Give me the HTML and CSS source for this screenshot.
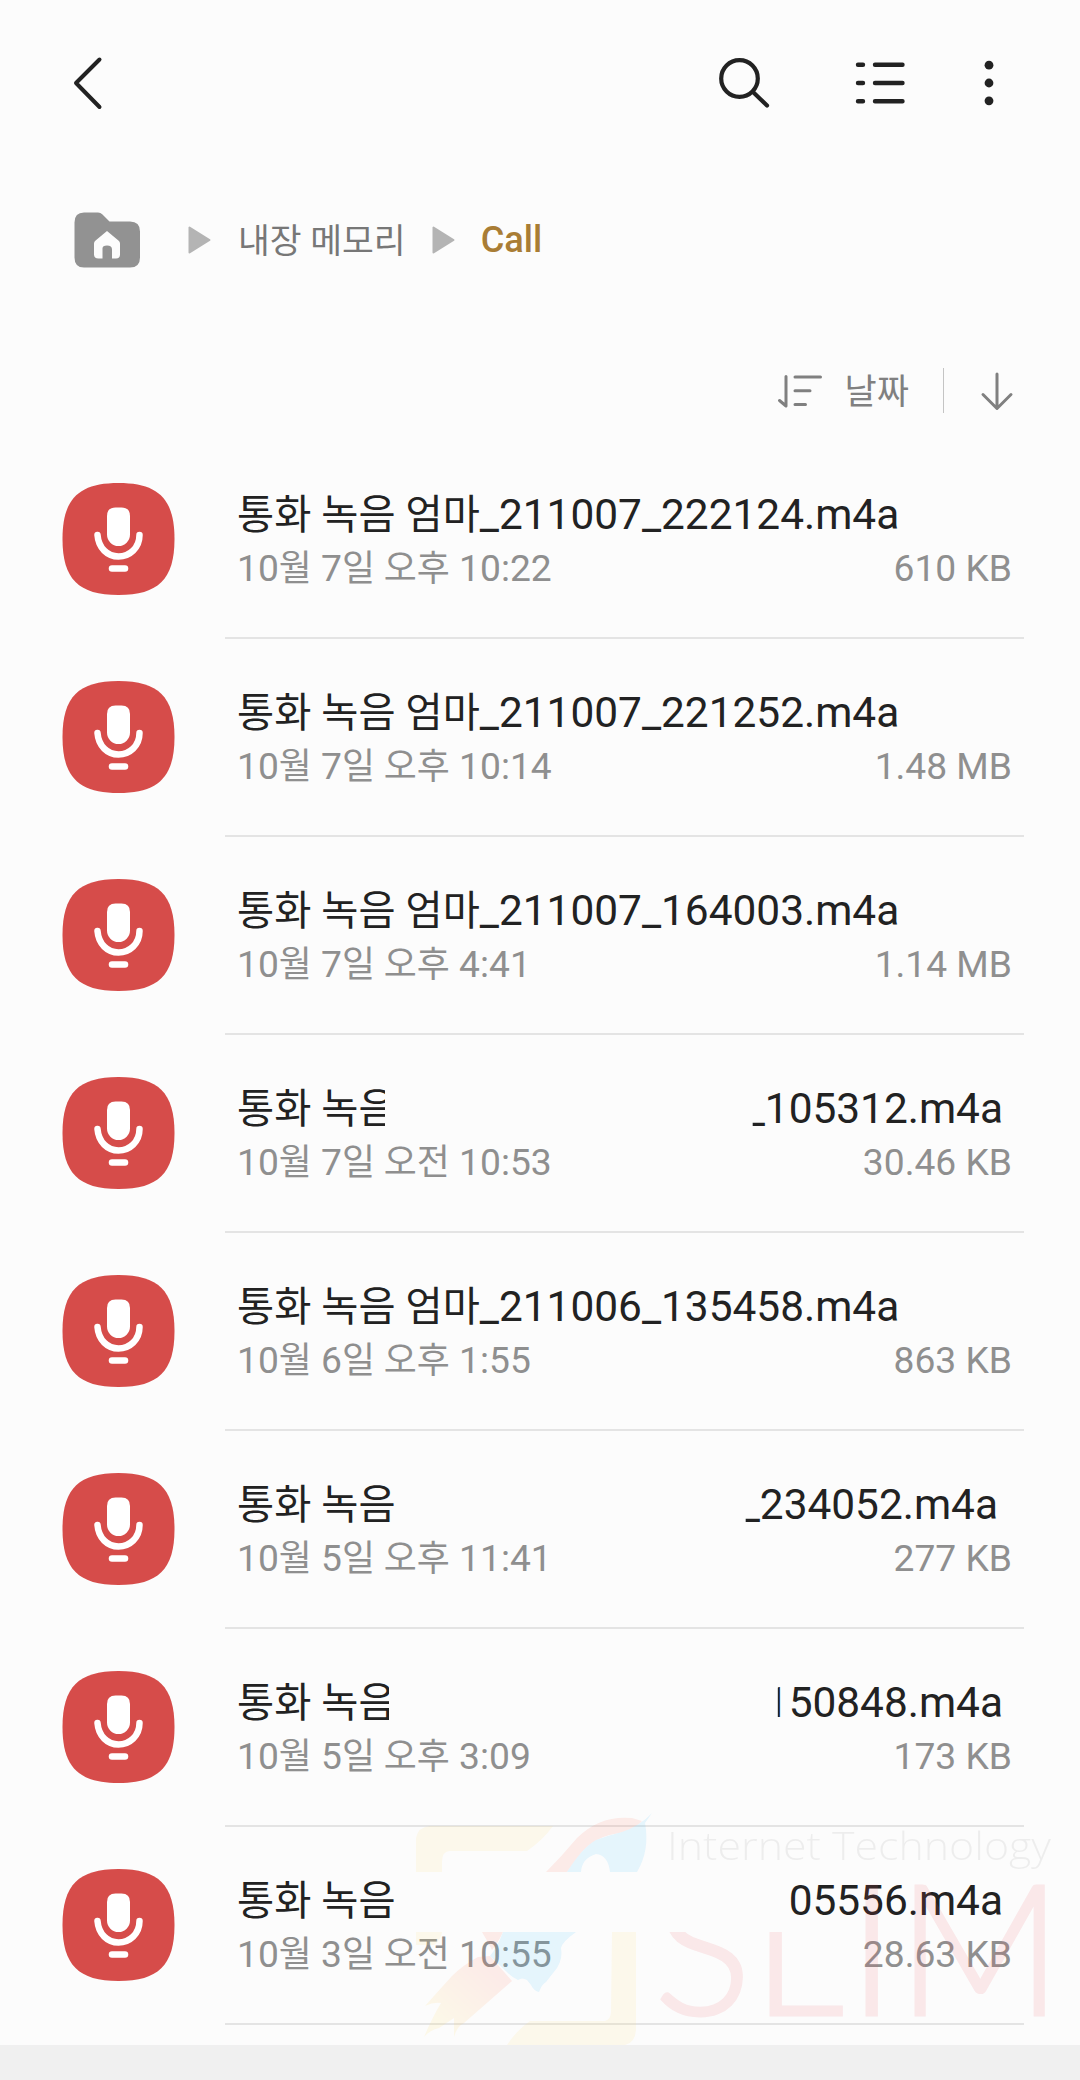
FILE: index.html
```html
<!DOCTYPE html>
<html lang="ko">
<head>
<meta charset="utf-8">
<title>Call</title>
<link rel="stylesheet" href="styles.css">
</head>
<body>
<svg class="defs" width="0" height="0" aria-hidden="true">
  <symbol id="mic" viewBox="0 0 112 112">
    <path fill="#d64c4a" d="M56 0C96 0 112 16 112 56S96 112 56 112S0 96 0 56S16 0 56 0Z"/>
    <path fill="#fff" d="M53 24.500h6q8.500 0 8.500 8.500v18.500a11.500 11.500 0 0 1-23 0V33q0-8.500 8.500-8.500Z"/>
    <path fill="none" stroke="#fff" stroke-width="6.500" stroke-linecap="round" d="M35 52C36 65 45 73.500 56 73.500S77 65 77 52"/>
    <path stroke="#fff" stroke-width="6.500" stroke-linecap="round" d="M49.500 85.500h13"/>
  </symbol>
</svg>
<div class="screen">
  <header class="toolbar">
    <svg class="back" width="30" height="56" viewBox="0 0 30 56"><path d="M26.500 4.500L3 28l23.500 24"/></svg>
    <svg class="search" width="54" height="54" viewBox="0 0 54 54"><circle cx="22.500" cy="22.500" r="18.300"/><path d="M36.500 36.500L50 49.500"/></svg>
    <svg class="lines" width="52" height="44" viewBox="0 0 52 44"><path d="M4 3.700h5M21 3.700h27.500M4 22h5M21 22h27.500M4 40.300h5M21 40.300h27.500"/></svg>
    <svg class="more" width="10" height="46" viewBox="0 0 10 46"><circle cx="5" cy="5.200" r="4.400"/><circle cx="5" cy="23" r="4.400"/><circle cx="5" cy="40.800" r="4.400"/></svg>
  </header>

  <nav class="crumbs">
    <svg class="home" width="66" height="56" viewBox="0 0 66 56">
      <path fill="#929292" d="M10 0.500H24Q26.500 0.500 28.500 2.500L35.500 9.500H56Q66 9.500 66 19.500V45.500Q66 55.500 56 55.500H10Q0.500 55.500 0.500 45.500V10.500Q0.500 0.500 10 0.500Z"/>
      <path fill="#fcfcfc" d="M33 19L45 29Q46 30 46 31.500V42.500Q46 46.500 42 46.500H38V37.500Q38 33.500 33 33.500T28.500 37.500V46.500H24.500Q20 46.500 20 42.500V31.500Q20 30 21 29Z"/>
    </svg>
    <svg class="tri tri-1" width="24" height="30" viewBox="0 0 24 30"><path d="M1.500 2.500v25l20-12.500z"/></svg>
    <span class="crumb">내장 메모리</span>
    <svg class="tri tri-2" width="24" height="30" viewBox="0 0 24 30"><path d="M1.500 2.500v25l20-12.500z"/></svg>
    <span class="crumb current">Call</span>
  </nav>

  <div class="sortbar">
    <svg width="46" height="36" viewBox="0 0 46 36"><path d="M2.500 27.500L9 33V3.500M18 4h25.500M18 17.800h15M18 31.500h10.500"/></svg>
    <span class="sort-label">날짜</span>
    <span class="sort-divider"></span>
    <svg width="34" height="40" viewBox="0 0 34 40"><path d="M17 3v34M3 23.500L17 37.500L31 23.500"/></svg>
  </div>

  <ul class="files">
    <li class="file"><svg class="icon"><use href="#mic"/></svg><div class="info"><div class="name"><span><span class="ko">통화 녹음 엄마</span>_211007_222124.m4a</span></div><div class="meta"><span>10<span class="ko">월</span> 7<span class="ko">일 오후</span> 10:22</span><span>610 KB</span></div></div></li>
    <li class="file"><svg class="icon"><use href="#mic"/></svg><div class="info"><div class="name"><span><span class="ko">통화 녹음 엄마</span>_211007_221252.m4a</span></div><div class="meta"><span>10<span class="ko">월</span> 7<span class="ko">일 오후</span> 10:14</span><span>1.48 MB</span></div></div></li>
    <li class="file"><svg class="icon"><use href="#mic"/></svg><div class="info"><div class="name"><span><span class="ko">통화 녹음 엄마</span>_211007_164003.m4a</span></div><div class="meta"><span>10<span class="ko">월</span> 7<span class="ko">일 오후</span> 4:41</span><span>1.14 MB</span></div></div></li>
    <li class="file"><svg class="icon"><use href="#mic"/></svg><div class="info"><div class="name"><span class="cut-a"><span class="ko">통화 녹음</span></span><span class="tail tail-a">_105312.m4a</span></div><div class="meta"><span>10<span class="ko">월</span> 7<span class="ko">일 오전</span> 10:53</span><span>30.46 KB</span></div></div></li>
    <li class="file"><svg class="icon"><use href="#mic"/></svg><div class="info"><div class="name"><span><span class="ko">통화 녹음 엄마</span>_211006_135458.m4a</span></div><div class="meta"><span>10<span class="ko">월</span> 6<span class="ko">일 오후</span> 1:55</span><span>863 KB</span></div></div></li>
    <li class="file"><svg class="icon"><use href="#mic"/></svg><div class="info"><div class="name"><span><span class="ko">통화 녹음</span></span><span class="tail tail-b">_234052.m4a</span></div><div class="meta"><span>10<span class="ko">월</span> 5<span class="ko">일 오후</span> 11:41</span><span>277 KB</span></div></div></li>
    <li class="file"><svg class="icon"><use href="#mic"/></svg><div class="info"><div class="name"><span class="cut-b"><span class="ko">통화 녹음</span></span><span class="tail tail-c">150848.m4a</span></div><div class="meta"><span>10<span class="ko">월</span> 5<span class="ko">일 오후</span> 3:09</span><span>173 KB</span></div></div></li>
    <li class="file"><svg class="icon"><use href="#mic"/></svg><div class="info"><div class="name"><span><span class="ko">통화 녹음</span></span><span class="tail">05556.m4a</span></div><div class="meta"><span>10<span class="ko">월</span> 3<span class="ko">일 오전</span> 10:55</span><span>28.63 KB</span></div></div></li>
  </ul>
  <footer class="bottom"></footer>

  <svg class="watermark" width="670" height="250" viewBox="410 1805 670 250">
    <defs>
      <linearGradient id="flame" x1="1" y1="0" x2="0" y2="1"><stop offset="0.200" stop-color="#ff6e5a"/><stop offset="0.800" stop-color="#ffd75a"/></linearGradient>
      <clipPath id="lower"><path d="M650 1932H850V1860H1080V2055H650Z"/></clipPath>
    </defs>
    <g opacity="0.120">
      <path fill="#ffdb70" d="M416 1872V1838Q418 1827 430 1826H553Q543 1840 527 1851H450Q442 1851 442 1862V1872Z"/>
      <path fill="#ffdb70" d="M416 1932H442Q441 1940 434 1945L416 1945Z"/>
      <path fill="#ff6e5a" d="M546 1872Q562 1856 577 1838Q600 1815 632 1818L642 1821Q636 1829 620 1833Q596 1836 582 1852L567 1872Z"/>
      <path fill="#3cbeff" d="M567 1872Q582 1848 596 1840Q610 1835 622 1832Q640 1826 652 1813L645 1823Q650 1850 637 1872H610Q608 1855 596 1854Q582 1858 581 1872Z"/>
      <path fill="#ff6e5a" d="M482 1932H503Q498 1943 492 1950Q488 1942 482 1932Z"/>
      <path fill="#3cbeff" d="M503 1932H576Q562 1942 561 1948Q563 1958 557 1968L546 1982Q542 1984 539 1992Q534 1991 531 1985L527 1980Q522 1977 518 1980Q512 1977 509 1974L490 1956Q498 1946 503 1932Z"/>
      <path fill="url(#flame)" d="M478 1957L490 1956L512 1981L464 2023Q457 2026 454 2037V2018L439 2028Q430 2030 424 2037Q433 2016 441 2003Q433 2002 425 2006Q441 1988 452 1976Q463 1965 478 1957Z"/>
      <path fill="#ffdb70" d="M612 1932H636V2030Q635 2043 625 2045H507Q516 2031 530 2021H605Q611 2019 611 2012Z"/>
      <g clip-path="url(#lower)"><text class="wm-brand" x="654 752 848 897" y="2015">SLIM</text></g>
    </g>
    <text class="wm-tag" x="667" y="1860" textLength="384" lengthAdjust="spacingAndGlyphs">Internet Technology</text>
  </svg>
</div>
</body>
</html>
```
FILE: styles.css
```css
* { box-sizing: border-box; }

body {
  margin: 0;
  background: #fcfcfc;
  font-family: Roboto, "Noto Sans CJK KR", sans-serif;
  color: #222;
}

.defs { position: absolute; }

.screen {
  position: relative;
  width: 1080px;
  height: 2080px;
  display: flex;
  flex-direction: column;
  overflow: hidden;
}

.screen > * { flex-shrink: 0; }

.toolbar {
  height: 166px;
  padding: 0 86px 0 73px;
  display: flex;
  align-items: center;
  stroke: #222;
  fill: none;
  stroke-linecap: round;
  stroke-linejoin: round;
}

.back { stroke-width: 4; }
.search { margin-left: auto; stroke-width: 4.2; }
.lines { margin-left: 83px; stroke-width: 4.4; }
.more { margin-left: 78px; fill: #222; stroke: none; }

.crumbs {
  height: 148px;
  padding: 0 74px;
  display: flex;
  align-items: center;
  font-size: 34.6px;
  color: #777;
}

.crumb { padding-top: 2px; white-space: nowrap; line-height: 52px; }
.current { padding-top: 0; color: #a97d35; font-size: 36.200px; font-weight: 500; }
.tri { fill: #b4b4b4; stroke: #b4b4b4; stroke-width: 2; stroke-linejoin: round; }
.tri-1 { margin: 0 26px 0 48px; }
.tri-2 { margin: 0 25px 0 26px; }

.sortbar {
  height: 127px;
  padding: 26px 66px 0 0;
  display: flex;
  justify-content: flex-end;
  align-items: center;
  color: #808080;
  stroke: #808080;
  stroke-width: 3;
  stroke-linecap: round;
  stroke-linejoin: round;
  fill: none;
}

.sort-label { margin-left: 22px; padding-top: 5px; font-size: 35px; line-height: 52px; }
.sort-divider { width: 1px; height: 45px; margin: 0 36px 0 34px; background: #c4c4c4; }

.files { margin: 0; padding: 0 56px 0 62px; list-style: none; }
.file { height: 198px; display: flex; }
.icon { width: 113px; height: 112px; margin-top: 42px; }

.info {
  flex: 1;
  margin-left: 50px;
  padding: 46px 12px 0;
  border-bottom: 2px solid #e4e4e4;
}

.name {
  display: flex;
  justify-content: space-between;
  height: 55px;
  font-size: 42.400px;
  line-height: 56px;
  white-space: nowrap;
}

.meta {
  display: flex;
  justify-content: space-between;
  height: 52px;
  font-size: 37.200px;
  line-height: 52px;
  color: #8f8f8f;
  white-space: nowrap;
}

.name .ko { font-size: 0.952em; }
.meta .ko { font-size: 0.965em; }

.tail { margin-right: 9px; }
.cut-a { width: 147.500px; overflow: hidden; }
.cut-b { width: 151.500px; overflow: hidden; }
.tail-a { clip-path: inset(0 0 0 7px); }
.tail-b { margin-right: 14px; clip-path: inset(0 0 0 5px); }
.tail-c { clip-path: inset(0 0 0 13px); }

.bottom { height: 35px; margin-top: auto; background: #f0f0f0; }

.watermark {
  position: absolute;
  left: 410px;
  top: 1805px;
}

.wm-brand { font-family: Lato, sans-serif; font-weight: 300; font-size: 182px; fill: #eb5560; stroke: #eb5560; stroke-width: 3; }
.wm-tag { font-family: "Open Sans", sans-serif; font-weight: 300; font-size: 39px; fill: rgba(0, 0, 0, 0.060); }
```
